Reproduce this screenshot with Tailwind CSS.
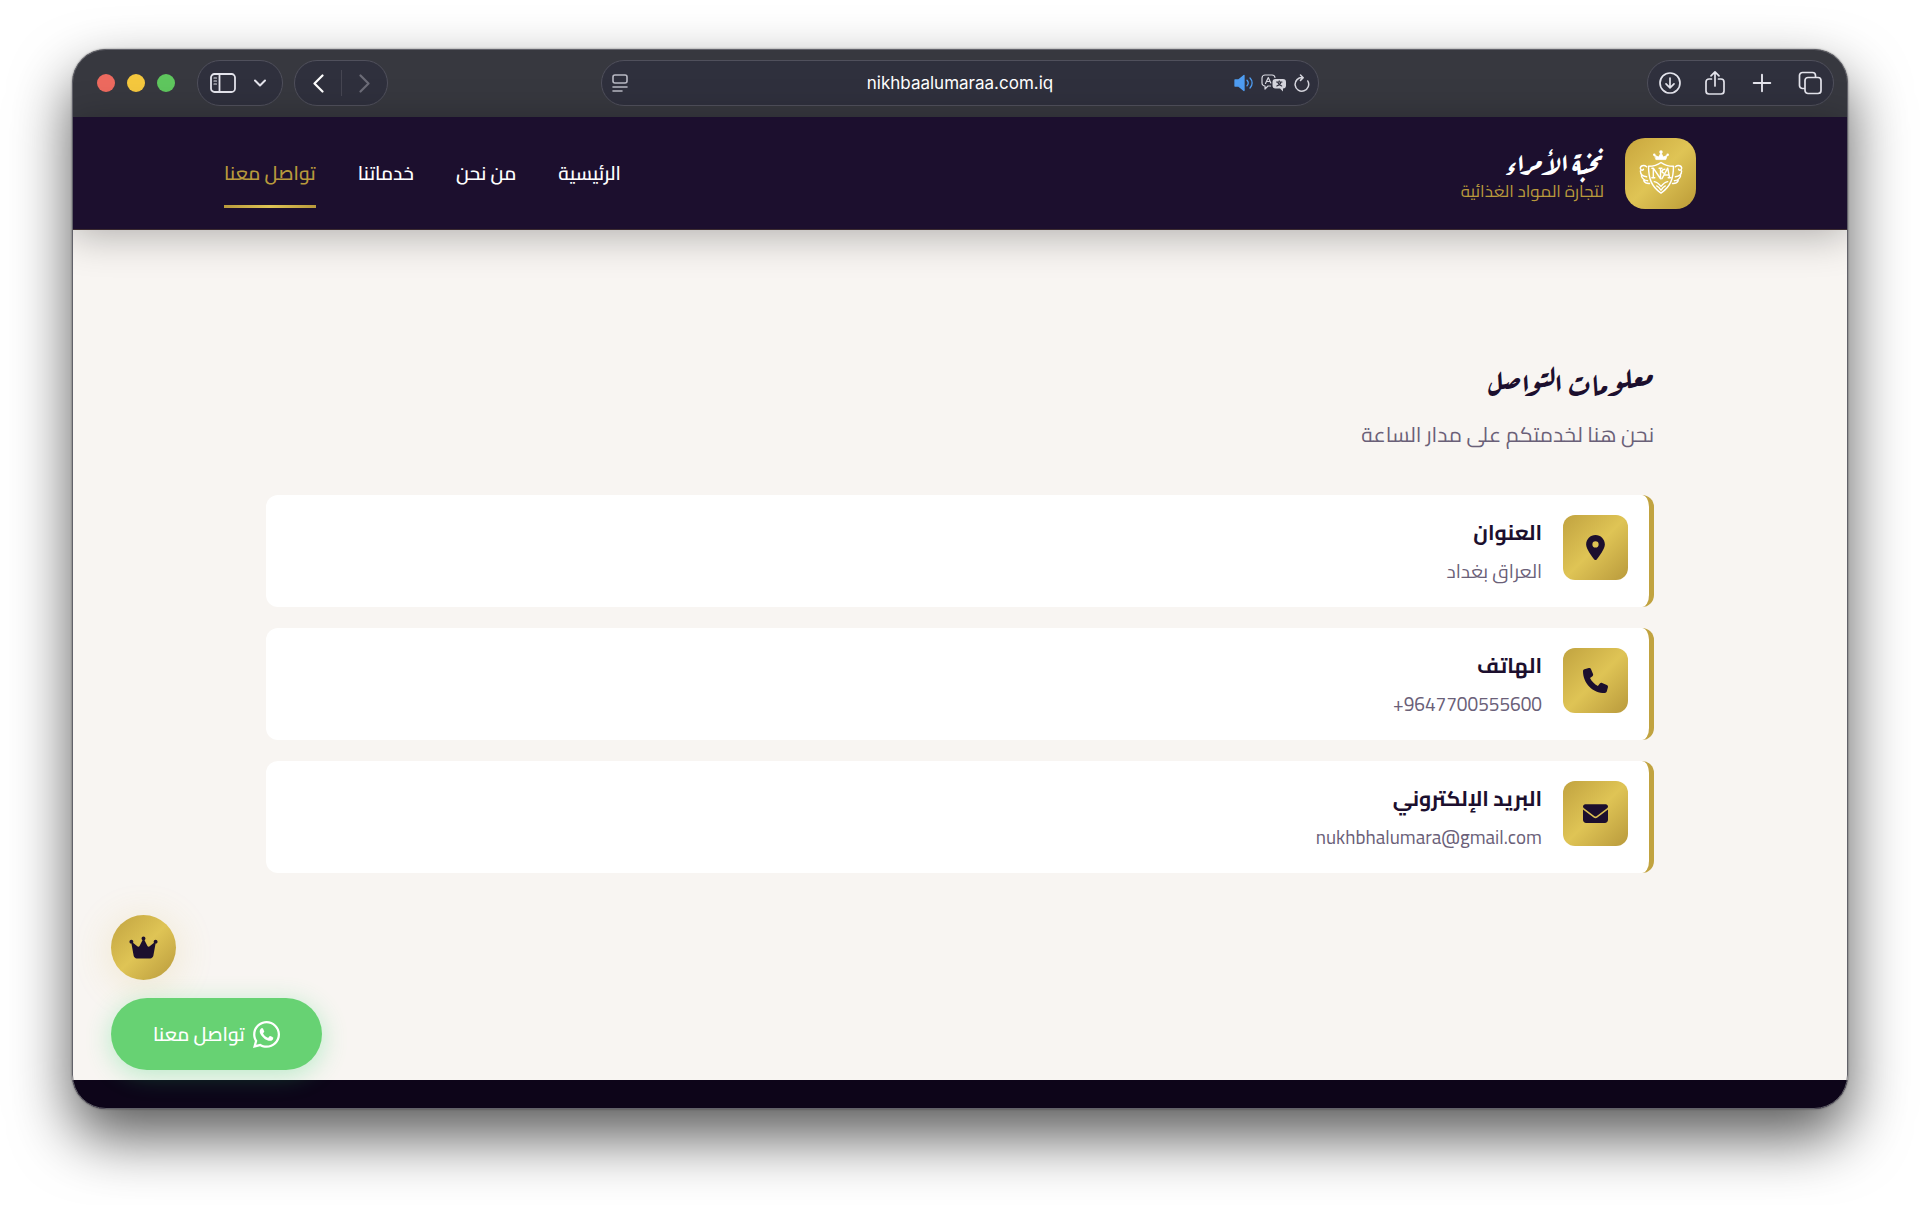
<!DOCTYPE html>
<html lang="ar">
<head>
  <meta charset="UTF-8" />
  <meta name="viewport" content="width=device-width, initial-scale=1" />
  <title>نخبة الأمراء - تواصل معنا</title>
  <script src="https://cdn.jsdelivr.net/npm/@tailwindcss/browser@4"></script>
</head>
<body class="bg-white min-h-screen flex flex-col px-[72px] pt-[49px] pb-24 font-['Cairo','Open_Sans','DejaVu_Sans',sans-serif]">

  <!-- Browser window -->
  <div class="relative flex-1 flex flex-col rounded-[34px] overflow-hidden bg-[#f8f5f2] shadow-[0_0_2px_rgba(0,0,0,0.5),0_28px_60px_rgba(0,0,0,0.65)]">

    <!-- Toolbar -->
    <div class="bg-[#37383f] h-[68px] grid grid-cols-[1fr_minmax(0,718px)_1fr] items-center text-[#e4e4ec]">
      <div class="flex items-center pl-[25px]">
        <div class="flex gap-3">
          <span class="size-[18px] rounded-full bg-[#ed6a5f]"></span>
          <span class="size-[18px] rounded-full bg-[#f5c83e]"></span>
          <span class="size-[18px] rounded-full bg-[#5fc75e]"></span>
        </div>
        <div class="ml-[22px] h-[46px] w-[86px] rounded-full border border-[#50505c] bg-[#2f303d] flex items-center pl-3 gap-[18px]">
          <button type="button" aria-label="Sidebar">
            <svg class="w-[26px] h-5" viewBox="0 0 26 20" fill="none" stroke="currentColor" stroke-width="1.8" stroke-linecap="round">
              <rect x="1" y="1" width="24" height="18" rx="3.5" />
              <path d="M9.5 1v18" />
              <path d="M4 5h2.5M4 8h2.5M4 11h2.5" stroke-width="1.2" />
            </svg>
          </button>
          <button type="button" aria-label="Tab groups">
            <svg class="w-3 h-2" viewBox="0 0 12 8" fill="none" stroke="currentColor" stroke-width="2" stroke-linecap="round" stroke-linejoin="round"><path d="M1 1.5l5 5 5-5" /></svg>
          </button>
        </div>
        <div class="ml-[11px] h-[46px] w-[94px] rounded-full border border-[#50505c] bg-[#2f303d] flex items-center justify-center gap-[17px]">
          <button type="button" aria-label="Back">
            <svg class="w-[11px] h-[19px]" viewBox="0 0 11 19" fill="none" stroke="#fff" stroke-width="2.2" stroke-linecap="round" stroke-linejoin="round"><path d="M9.5 1.5l-8 8 8 8" /></svg>
          </button>
          <span class="w-px h-[26px] bg-[#464652]"></span>
          <button type="button" aria-label="Forward">
            <svg class="w-[11px] h-[19px]" viewBox="0 0 11 19" fill="none" stroke="#6c6c78" stroke-width="2.2" stroke-linecap="round" stroke-linejoin="round"><path d="M1.5 1.5l8 8-8 8" /></svg>
          </button>
        </div>
      </div>

      <div class="h-[46px] rounded-full border border-[#50505c] bg-[#2f303d] flex items-center pl-[10px] pr-2">
        <svg class="w-4 h-[18px]" viewBox="0 0 16 18" fill="none" stroke="#b9b9c4" stroke-width="1.6" stroke-linecap="round">
          <rect x="1" y="1" width="14" height="8" rx="2" />
          <path d="M1 13h14M1 17h9" />
        </svg>
        <input type="text" aria-label="Address" value="nikhbaalumaraa.com.iq" class="flex-1 min-w-0 pl-[58px] pt-0.5 text-center text-white text-[17px] font-['Inter','Liberation_Sans',sans-serif] bg-transparent outline-none" />
        <div class="flex items-center gap-[7px]">
          <svg class="w-5 h-[18px]" viewBox="0 0 20 18" fill="none" stroke="#4f9df2" stroke-width="1.3" stroke-linecap="round">
            <path d="M1 6h3.500L10 1.500v15L4.500 12H1z" fill="#4f9df2" stroke-linejoin="round" />
            <path d="M13 6.300a4 4 0 0 1 0 5.400M16 4a7 7 0 0 1 0 10" />
          </svg>
          <svg class="w-[26px] h-[18px]" viewBox="0 0 26 18" fill="none" stroke="#d6d6de" stroke-width="1.2" stroke-linecap="round" stroke-linejoin="round">
            <path d="M9.500 12H7l-3 3v-3a3 3 0 0 1-3-3V4a3 3 0 0 1 3-3h7a3 3 0 0 1 3 2.500" />
            <path d="M4.500 9.500L7.300 3.500l2.500 5.500M5.500 7.500h3.500" />
            <path d="M14.500 5H22a3 3 0 0 1 3 3v3.500a3 3 0 0 1-3 3v3L19 14.500h-4.500a3 3 0 0 1-3-3V8a3 3 0 0 1 3-3z" fill="#d6d6de" stroke="none" />
            <path d="M15.500 8h5.500M18.200 6.800V8M20 8c-.5 2-2 3.200-4.200 4M16.500 8c.7 2 2 3.200 4.200 4" stroke="#2f303d" stroke-width="1.1" />
          </svg>
          <button type="button" aria-label="Reload">
            <svg class="w-4 h-[18px]" viewBox="0 0 16 18" fill="none" stroke="#d6d6de" stroke-width="1.5" stroke-linecap="round" stroke-linejoin="round">
              <path d="M13.800 7A6.800 6.800 0 1 1 8.500 3.600M6.500 1l2.700 2.700L6.500 6.400" />
            </svg>
          </button>
        </div>
      </div>

      <div class="flex justify-end pr-3.5">
        <div class="h-[46px] rounded-full border border-[#50505c] bg-[#2f303d] flex items-center gap-[23px] px-[11px]">
          <button type="button" aria-label="Downloads">
            <svg class="size-[22px]" viewBox="0 0 22 22" fill="none" stroke="currentColor" stroke-width="1.7" stroke-linecap="round" stroke-linejoin="round"><circle cx="11" cy="11" r="10" /><path d="M11 6v9.500M7 11.800l4 4 4-4" /></svg>
          </button>
          <button type="button" aria-label="Share">
            <svg class="w-[22px] h-[26px]" viewBox="0 0 22 26" fill="none" stroke="currentColor" stroke-width="1.7" stroke-linecap="round" stroke-linejoin="round"><path d="M7.500 9H5a3 3 0 0 0-3 3v9a3 3 0 0 0 3 3h12a3 3 0 0 0 3-3v-9a3 3 0 0 0-3-3h-2.500M11 16V2M7 5.800l4-4 4 4" /></svg>
          </button>
          <button type="button" aria-label="New tab">
            <svg class="size-[26px]" viewBox="0 0 26 26" fill="none" stroke="currentColor" stroke-width="1.900" stroke-linecap="round"><path d="M13 4.700v16.600M4.700 13h16.600" /></svg>
          </button>
          <button type="button" aria-label="Tab overview">
            <svg class="size-6" viewBox="0 0 24 24" fill="none" stroke="currentColor" stroke-width="1.700" stroke-linejoin="round"><rect x="7" y="6.500" width="16" height="16" rx="3" /><path d="M7 17.500H4.500a3 3 0 0 1-3-3v-10a3 3 0 0 1 3-3h10a3 3 0 0 1 3 3v2" /></svg>
          </button>
        </div>
      </div>
    </div>

    <!-- Site header -->
    <header dir="rtl" class="relative z-10 bg-[#1c0f2e] h-[113px] border-b border-[#b99a3c]/20 shadow-[0_5px_40px_rgba(0,0,0,0.3)]">
      <div class="max-w-[1472px] mx-auto h-full flex items-center justify-between">
        <a href="#" class="flex items-center gap-[21px]">
          <span class="size-[71px] rounded-[20px] bg-linear-135 from-[#c9a63d] via-[#dfc455] to-[#bb9b37] flex items-center justify-center">
            <svg class="size-[46px]" viewBox="0 0 48 48" fill="none" stroke="#fff" stroke-width="1.500" stroke-linecap="round" stroke-linejoin="round">
              <path d="M19 10h10l1.500-4.500-4 1.800L24 3l-2.500 4.300-4-1.800z" fill="#fff" stroke-width=".8" />
              <circle cx="24" cy="2" r="1.800" fill="#fff" stroke="none" />
              <circle cx="17" cy="5" r="1.300" fill="#fff" stroke="none" />
              <circle cx="31" cy="5" r="1.300" fill="#fff" stroke="none" />
              <path d="M24 13c-4 3-8 4-13 4 0 13 3 21 13 28 10-7 13-15 13-28-5 0-9-1-13-4z" />
              <path d="M9 17.500c-3-2.500-7-1-6.500 2 .4 2 3 2 3.200.5M2.500 22c0 3.500 2.500 5.500 6.500 6M3.500 27c1 3.200 3 4.800 6.500 5M6 32c1 2 3 3.200 6 3" />
              <path d="M39 17.500c3-2.500 7-1 6.500 2-.4 2-3 2-3.200.5M45.500 22c0 3.500-2.500 5.500-6.500 6M44.500 27c-1 3.200-3 4.800-6.500 5M42 32c-1 2-3 3.200-6 3" />
              <path d="M16 29V19l7.500 11V19M14.500 19H16M22 19h3M14.500 29h3M25 30l6-11 2 10M27 26h5M31.500 29h3M28 20c-3 0-4 3-1.500 4" />
              <path d="M17 33c3 .3 5 2.500 7 5 2-2.500 4-4.700 7-5M19.500 37.500c2 .8 3.300 2.500 4.500 4.500 1.200-2 2.500-3.700 4.500-4.500" />
            </svg>
          </span>
          <span class="flex flex-col">
            <span class="text-white text-[29px] leading-8 font-bold font-['Aref_Ruqaa','DejaVu_Sans',serif]">نخبة الأمراء</span>
            <span class="pt-1 text-[#b99a3c] text-[17px] leading-5">لتجارة المواد الغذائية</span>
          </span>
        </a>
        <nav class="flex gap-[42px] text-[19px] leading-7 font-semibold text-white">
          <a href="#" class="py-[21px]">الرئيسية</a>
          <a href="#" class="py-[21px]">من نحن</a>
          <a href="#" class="py-[21px]">خدماتنا</a>
          <a href="#" aria-current="page" class="relative py-[21px] text-[#b99a3c]">تواصل معنا
            <span class="absolute inset-x-0 bottom-0 h-[3px] bg-linear-to-r from-[#b99a3c] via-[#dfc455] to-[#b99a3c]"></span>
          </a>
        </nav>
      </div>
    </header>

    <!-- Contact info -->
    <main dir="rtl" class="flex-1 w-full max-w-[1388px] mx-auto pt-[125px]">
      <h1 class="text-[31px] leading-[52px] font-bold text-[#1c0f2e] font-['Aref_Ruqaa','DejaVu_Sans',serif]">معلومات التواصل</h1>
      <p class="mt-3 text-[21px] leading-8 text-[#6a6078]">نحن هنا لخدمتكم على مدار الساعة</p>

      <div class="mt-11 space-y-[21px]">
        <div class="flex gap-[21px] h-[112px] px-[21px] py-5 bg-white rounded-xl border-r-[5px] border-[#c1a340]">
          <div class="size-[65px] shrink-0 rounded-xl bg-linear-135 from-[#c1a340] via-[#dfc455] to-[#b99a3c] flex items-center justify-center">
            <svg class="h-[25px] w-[19px]" viewBox="0 0 384 512" fill="#1c0f2e"><path d="M215.700 499.200C267 435 384 279.400 384 192 384 86 298 0 192 0S0 86 0 192c0 87.400 117 243 168.300 307.200 12.300 15.300 35.100 15.300 47.400 0zM192 128a64 64 0 1 1 0 128 64 64 0 1 1 0-128z" /></svg>
          </div>
          <div>
            <h2 class="text-[21px] leading-9 font-bold text-[#1c0f2e]">العنوان</h2>
            <p class="mt-1.5 text-[19px] leading-7 text-[#6a6078]">العراق بغداد</p>
          </div>
        </div>

        <div class="flex gap-[21px] h-[112px] px-[21px] py-5 bg-white rounded-xl border-r-[5px] border-[#c1a340]">
          <div class="size-[65px] shrink-0 rounded-xl bg-linear-135 from-[#c1a340] via-[#dfc455] to-[#b99a3c] flex items-center justify-center">
            <svg class="size-[25px]" viewBox="0 0 512 512" fill="#1c0f2e"><path d="M164.900 24.600c-7.700-18.600-28-28.500-47.400-23.200l-88 24C12.100 30.200 0 46 0 64c0 247.400 200.600 448 448 448 18 0 33.800-12.100 38.600-29.500l24-88c5.300-19.400-4.600-39.700-23.200-47.400l-96-40c-16.300-6.800-35.200-2.100-46.300 11.600L304.700 368C234.300 334.700 177.300 277.700 144 207.300L193.300 167c13.700-11.200 18.400-30 11.600-46.300l-40-96z" /></svg>
          </div>
          <div>
            <h2 class="text-[21px] leading-9 font-bold text-[#1c0f2e]">الهاتف</h2>
            <p class="mt-1.5 text-[19px] leading-7 text-[#6a6078]"><a href="tel:+9647700555600" dir="ltr">+9647700555600</a></p>
          </div>
        </div>

        <div class="flex gap-[21px] h-[112px] px-[21px] py-5 bg-white rounded-xl border-r-[5px] border-[#c1a340]">
          <div class="size-[65px] shrink-0 rounded-xl bg-linear-135 from-[#c1a340] via-[#dfc455] to-[#b99a3c] flex items-center justify-center">
            <svg class="size-[25px]" viewBox="0 0 512 512" fill="#1c0f2e"><path d="M48 64C21.500 64 0 85.500 0 112c0 15.100 7.100 29.300 19.200 38.400l217.600 163.200c11.400 8.500 27 8.500 38.400 0l217.600-163.200c12.100-9.100 19.200-23.300 19.200-38.400 0-26.500-21.500-48-48-48H48zM0 176v208c0 35.300 28.700 64 64 64h384c35.300 0 64-28.700 64-64V176L294.400 339.200c-22.800 17.100-54 17.100-76.800 0L0 176z" /></svg>
          </div>
          <div>
            <h2 class="text-[21px] leading-9 font-bold text-[#1c0f2e]">البريد الإلكتروني</h2>
            <p class="mt-1.5 text-[19px] leading-7 text-[#6a6078]"><a href="mailto:nukhbhalumara@gmail.com" dir="ltr">nukhbhalumara@gmail.com</a></p>
          </div>
        </div>
      </div>
    </main>

    <footer class="h-[29px] bg-[#0d0519]"></footer>

    <!-- Floating buttons -->
    <div dir="rtl" class="absolute z-20 left-[39px] bottom-[39px] flex flex-col items-end gap-[18px]">
      <button type="button" aria-label="أعلى الصفحة" class="size-[65px] rounded-full bg-linear-135 from-[#c1a340] via-[#dfc455] to-[#b99a3c] shadow-[0_5px_40px_rgba(212,175,55,0.2)] flex items-center justify-center">
        <svg class="w-[29px] h-[25px]" viewBox="0 0 576 512" fill="#1c0f2e"><path d="M309 106c11.400-7 19-19.700 19-34 0-22.100-17.900-40-40-40s-40 17.900-40 40c0 14.400 7.600 27 19 34l-57.300 114.600c-9.100 18.200-32.700 23.400-48.600 10.700L72 160c5-6.700 8-15 8-24 0-22.100-17.900-40-40-40S0 113.900 0 136s17.900 40 40 40h.7l45.700 251.400c5.500 30.400 32 52.600 63 52.600h277.200c30.900 0 57.400-22.100 63-52.600L535.300 176h.7c22.100 0 40-17.900 40-40s-17.900-40-40-40-40 17.900-40 40c0 9 3 17.300 8 24l-89.100 71.300c-15.900 12.700-39.500 7.500-48.600-10.700L309 106z" /></svg>
      </button>
      <a href="#" class="h-[72px] px-[42px] rounded-full bg-[#67d273] text-white text-[19px] font-semibold shadow-[0_5px_26px_rgba(37,211,102,0.3)] flex items-center gap-2">
        <svg class="size-[27px]" viewBox="0 0 448 448" fill="#fff"><path d="M380.900 65.100C339 23.100 283.200 0 223.900 0 101.500 0 1.900 99.600 1.900 222c0 39.100 10.200 77.300 29.600 111L0 448l117.700-30.900c32.400 17.700 68.900 27 106.100 27h.1c122.300 0 224.100-99.600 224.100-222 0-59.300-25.200-115-67.100-157zm-157 341.600c-33.200 0-65.700-8.900-94-25.700l-6.700-4-69.800 18.300L72 327.200l-4.400-7c-18.500-29.400-28.200-63.300-28.200-98.200 0-101.700 82.800-184.500 184.600-184.500 49.300 0 95.600 19.200 130.400 54.100 34.800 34.900 56.200 81.200 56.100 130.500 0 101.800-84.900 184.600-186.600 184.600z" /><path d="M325.100 268.500c-5.500-2.800-32.800-16.200-37.900-18-5.100-1.900-8.800-2.800-12.500 2.800s-14.300 18-17.600 21.800c-3.200 3.700-6.500 4.200-12 1.400-32.600-16.300-54-29.100-75.500-66-5.700-9.800 5.700-9.100 16.300-30.300 1.800-3.700.9-6.900-.5-9.700-1.400-2.800-12.500-30.100-17.100-41.200-4.500-10.800-9.100-9.300-12.500-9.500h-10.600c-3.700 0-9.700 1.400-14.800 6.900-5.100 5.600-19.400 19-19.400 46.300s19.900 53.700 22.600 57.400c2.800 3.700 39.100 59.700 94.800 83.800 35.200 15.200 49 16.500 66.600 13.900 10.700-1.600 32.800-13.400 37.400-26.400s4.600-24.100 3.200-26.400c-1.300-2.500-5-3.900-10.500-6.800z" /></svg>
        تواصل معنا
      </a>
    </div>

    <!-- Window edge -->
    <div class="pointer-events-none absolute inset-0 z-30 rounded-[34px] border border-[#62626a]"></div>
  </div>

</body>
</html>
